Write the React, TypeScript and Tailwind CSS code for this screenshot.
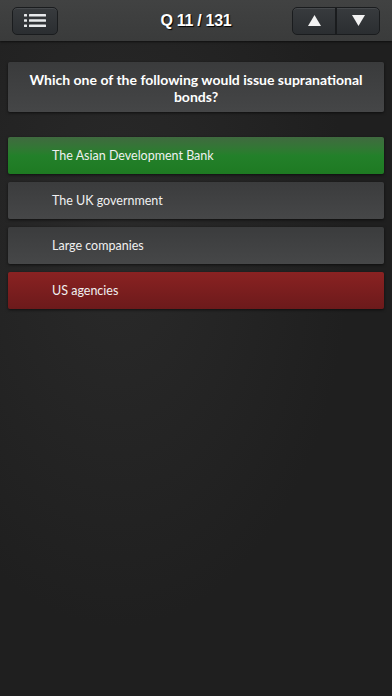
import { useState } from 'react';

const answers = [
  { text: 'The Asian Development Bank', tone: 'correct' },
  { text: 'The UK government', tone: 'plain' },
  { text: 'Large companies', tone: 'plain' },
  { text: 'US agencies', tone: 'wrong' },
];

const toneClass: Record<string, string> = {
  correct: 'bg-gradient-to-b from-[#3f6a3f] via-[#23802a] to-[#1e7a22]',
  plain: 'bg-gradient-to-b from-[#3b3c3d] to-[#464748]',
  wrong: 'bg-gradient-to-b from-[#8a2222] to-[#6c1a1b]',
};

function ListIcon() {
  return (
    <svg width="22" height="13" viewBox="0 0 22 13" fill="#e8eaec">
      <rect x="0" y="0" width="3" height="2.4" rx="0.5" />
      <rect x="0" y="5.3" width="3" height="2.4" rx="0.5" />
      <rect x="0" y="10.6" width="3" height="2.4" rx="0.5" />
      <rect x="5" y="0" width="17" height="2.4" rx="0.5" />
      <rect x="5" y="5.3" width="17" height="2.4" rx="0.5" />
      <rect x="5" y="10.6" width="17" height="2.4" rx="0.5" />
    </svg>
  );
}

export default function App() {
  const [q, setQ] = useState(11);

  return (
    <div className="relative h-[696px] w-[392px] overflow-hidden bg-[#1f1f1f] [font-family:Lato,sans-serif]">
      <div className="pointer-events-none absolute inset-0 bg-[radial-gradient(ellipse_at_30%_35%,#2a2a2a_0%,transparent_60%)]" />
      <div className="relative grid h-[41px] grid-cols-[1fr_auto_1fr] items-center bg-gradient-to-b from-[#414242] to-[#3a3b3b] px-3 shadow-[0_1px_2px_rgba(0,0,0,0.6)]">
        <button className="flex h-[28px] w-[46px] items-center justify-center rounded-[5px] border border-[#1a1c1e] bg-gradient-to-b from-[#383b3e] to-[#2b2e31] shadow-[inset_0_1px_0_rgba(255,255,255,0.08)]">
          <ListIcon />
        </button>
        <div className="text-[16px] font-bold tracking-[-0.3px] text-white [font-family:'Liberation_Sans',Arial,sans-serif] [text-shadow:1px_1px_1px_#000]">
          Q {q} / 131
        </div>
        <div className="flex h-[28px] w-[88px] justify-self-end overflow-hidden rounded-[5px] border border-[#1a1c1e] bg-gradient-to-b from-[#383b3e] to-[#2b2e31] shadow-[inset_0_1px_0_rgba(255,255,255,0.08)]">
          <button onClick={() => setQ(Math.max(1, q - 1))} className="flex flex-1 items-center justify-center border-r-2 border-[#1a1c1e]">
            <svg width="13" height="11" viewBox="0 0 13 11"><path d="M6.5 0 L13 11 L0 11 Z" fill="#f2f2f2" /></svg>
          </button>
          <button onClick={() => setQ(Math.min(131, q + 1))} className="flex flex-1 items-center justify-center">
            <svg width="13" height="11" viewBox="0 0 13 11"><path d="M0 0 L13 0 L6.5 11 Z" fill="#f2f2f2" /></svg>
          </button>
        </div>
      </div>

      <div className="relative px-2 pt-[21px]">
        <div className="flex h-[50px] items-center justify-center rounded-[2px] bg-gradient-to-b from-[#3a3b3c] to-[#454647] px-3 pt-[1px] text-center text-[14px] font-bold leading-[17px] text-white shadow-[0_1px_3px_rgba(0,0,0,0.6)]">
          Which one of the following would issue supranational bonds?
        </div>

        <div className="mt-[25px] flex flex-col gap-[8px]">
          {answers.map((a) => (
            <div
              key={a.text}
              className={`flex h-[37px] items-center rounded-[2px] pl-[44px] pt-[2px] text-[12.5px] text-[#f0f0f0] shadow-[0_1px_3px_rgba(0,0,0,0.6)] ${toneClass[a.tone]}`}
            >
              {a.text}
            </div>
          ))}
        </div>
      </div>
    </div>
  );
}
